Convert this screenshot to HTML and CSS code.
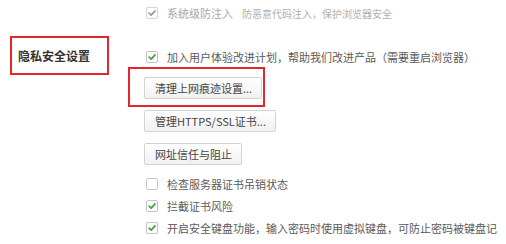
FILE: index.html
```html
<!DOCTYPE html>
<html lang="zh-CN">
<head>
<meta charset="utf-8">
<title>隐私安全设置</title>
<link rel="stylesheet" href="styles.css">
</head>
<body>
<div class="page">
  <div class="top-row">
    <label class="check-row disabled">
      <span class="box"><svg viewBox="0 0 12 12" width="10" height="10"><path d="M2.5 6.2 L5 8.6 L9.6 3.4" fill="none" stroke="#9a9a9a" stroke-width="2" stroke-linecap="round" stroke-linejoin="round"/></svg></span>
      <span class="text">系统级防注入</span>
      <span class="desc">防恶意代码注入，保护浏览器安全</span>
    </label>
  </div>

  <div class="section">
    <div class="label-col">
      <div class="section-label">隐私安全设置</div>
    </div>
    <div class="content-col">
      <label class="check-row first">
        <span class="box"><svg viewBox="0 0 12 12" width="10" height="10"><path d="M2.5 6.2 L5 8.6 L9.6 3.4" fill="none" stroke="#3fa341" stroke-width="2" stroke-linecap="round" stroke-linejoin="round"/></svg></span>
        <span class="text">加入用户体验改进计划，帮助我们改进产品（需要重启浏览器）</span>
      </label>
      <div class="btn-wrap highlighted">
        <button class="btn">清理上网痕迹设置...</button>
        <span class="mark"></span>
      </div>
      <div class="btn-wrap">
        <button class="btn">管理HTTPS/SSL证书...</button>
      </div>
      <div class="btn-wrap">
        <button class="btn">网址信任与阻止</button>
      </div>
      <div class="checks">
        <label class="check-row">
          <span class="box"></span>
          <span class="text">检查服务器证书吊销状态</span>
        </label>
        <label class="check-row">
          <span class="box"><svg viewBox="0 0 12 12" width="10" height="10"><path d="M2.5 6.2 L5 8.6 L9.6 3.4" fill="none" stroke="#3fa341" stroke-width="2" stroke-linecap="round" stroke-linejoin="round"/></svg></span>
          <span class="text">拦截证书风险</span>
        </label>
        <label class="check-row">
          <span class="box"><svg viewBox="0 0 12 12" width="10" height="10"><path d="M2.5 6.2 L5 8.6 L9.6 3.4" fill="none" stroke="#3fa341" stroke-width="2" stroke-linecap="round" stroke-linejoin="round"/></svg></span>
          <span class="text">开启安全键盘功能，输入密码时使用虚拟键盘，可防止密码被键盘记</span>
        </label>
        <label class="check-row">
          <span class="box"></span>
        </label>
      </div>
    </div>
  </div>
</div>
</body>
</html>
```

FILE: styles.css
```css
* { box-sizing: border-box; }

html, body {
  margin: 0;
  padding: 0;
  background: #ffffff;
  overflow: hidden;
}

body {
  width: 506px;
  height: 244px;
  font-family: "Noto Sans CJK SC", "Noto Sans", sans-serif;
  font-size: 11px;
  color: #5a5a5a;
}

.page {
  padding-top: 4px;
}

.top-row {
  padding-left: 146px;
}

.check-row {
  display: flex;
  align-items: center;
  height: 18px;
  white-space: nowrap;
}

.box {
  flex: none;
  width: 12px;
  height: 12px;
  border: 1px solid #c4c4c4;
  border-radius: 2px;
  background: #ffffff;
  display: flex;
  align-items: center;
  justify-content: center;
  margin-right: 9px;
}

.box svg { display: block; }

.disabled .box {
  border-color: #d6d6d6;
}

.disabled .text {
  color: #a8a8a8;
}

.desc {
  margin-left: 9px;
  font-size: 10px;
  color: #b0b0b0;
}

.section {
  display: grid;
  grid-template-columns: 144px 1fr;
  margin-top: 14px;
}

.section-label {
  margin-left: 10px;
  width: 99px;
  height: 39px;
  border: 2px solid #e3262b;
  padding-left: 6px;
  display: flex;
  align-items: center;
  font-size: 12px;
  font-weight: bold;
  color: #333333;
}

.content-col {
  padding-top: 11px;
}

.content-col .check-row {
  padding-left: 2px;
  height: 20px;
}

.btn-wrap {
  position: relative;
  margin-top: 10px;
  height: 22px;
}

.btn-wrap + .btn-wrap {
  margin-top: 11px;
}

.btn {
  height: 22px;
  padding: 0 9px 0 10px;
  border: 1px solid #d3d3d3;
  border-radius: 2px;
  background: linear-gradient(#ffffff, #f1f1f1);
  font-family: "Noto Sans CJK SC", "Noto Sans", sans-serif;
  font-size: 11px;
  color: #444444;
  line-height: 20px;
  white-space: nowrap;
}

.mark {
  position: absolute;
  left: -16px;
  top: -10px;
  width: 137px;
  height: 40px;
  border: 2px solid #e3262b;
  pointer-events: none;
}

.checks {
  margin-top: 8px;
}

.checks .check-row {
  height: 22px;
}
```
